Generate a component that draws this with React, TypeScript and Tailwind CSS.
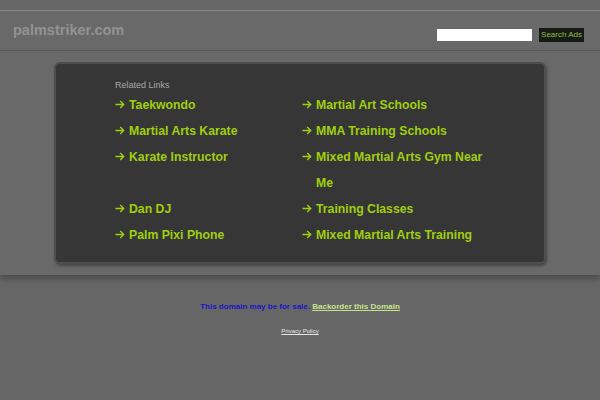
const left = ["Taekwondo", "Martial Arts Karate", "Karate Instructor", null, "Dan DJ", "Palm Pixi Phone"];
const right = [
  "Martial Art Schools",
  "MMA Training Schools",
  "Mixed Martial Arts Gym Near Me",
  "Training Classes",
  "Mixed Martial Arts Training",
];

function Arrow() {
  return (
    <svg width="10" height="9" viewBox="0 0 10 9" className="mt-[8px] mr-[4px] shrink-0">
      <path d="M0.5 4.5H8.8M5.2 1l3.5 3.5L5.2 8" fill="none" stroke="#9fcf0f" strokeWidth="1.4" />
    </svg>
  );
}

function LinkRow({ text }: { text: string }) {
  return (
    <li className="flex items-start">
      <Arrow />
      <a className="leading-[26px] text-[#9fcf0f]">{text}</a>
    </li>
  );
}

export default function App() {
  return (
    <div className="min-h-[400px] bg-[#666666] pt-[10px] font-['Liberation_Sans',Arial,sans-serif]">
      <div className="border-t border-[#8c8c8c] bg-[#696969]">
        <header className="flex h-[40px] items-center justify-between border-b border-[#5a5a5a] pl-[13px] pr-[16px]">
          <div className="text-[14.5px] font-bold text-[#939393]">palmstriker.com</div>
          <div className="mt-[8px] flex items-center gap-[7px]">
            <div className="h-[12px] w-[95px] bg-white" />
            <button className="h-[14px] bg-[#161a14] px-[2px] text-[8px] leading-[14px] text-[#8fbf4f]">
              Search Ads
            </button>
          </div>
        </header>
        <main className="px-[54px] pb-[11px] pt-[11px] shadow-[0_4px_6px_rgba(0,0,0,0.25)]">
          <div className="rounded-[6px] border-2 border-[#4e4e4e] bg-[#363636] pb-[14px] pl-[59px] pt-[15px] shadow-[1px_2px_3px_rgba(0,0,0,0.35)]">
            <div className="text-[9px] leading-[12px] text-[#a8a8a8]">Related Links</div>
            <div className="mt-[1px] flex text-[12.25px] font-bold">
              <ul className="w-[187px]">
                {left.map((t, i) =>
                  t ? <LinkRow key={i} text={t} /> : <li key={i} className="h-[26px]" />
                )}
              </ul>
              <ul className="w-[186px]">
                {right.map((t) => (
                  <LinkRow key={t} text={t} />
                ))}
              </ul>
            </div>
          </div>
        </main>
      </div>
      <footer className="pt-[26px] text-center">
        <p className="text-[8px] font-bold leading-[12px]">
          <span className="text-[#1a16c8]">This domain may be for sale. </span>
          <a className="text-[#c6e38c] underline">Backorder this Domain</a>
        </p>
        <p className="mt-[14px] text-[6px] leading-[8px]">
          <a className="text-[#e6e6e6] underline">Privacy Policy</a>
        </p>
      </footer>
    </div>
  );
}
